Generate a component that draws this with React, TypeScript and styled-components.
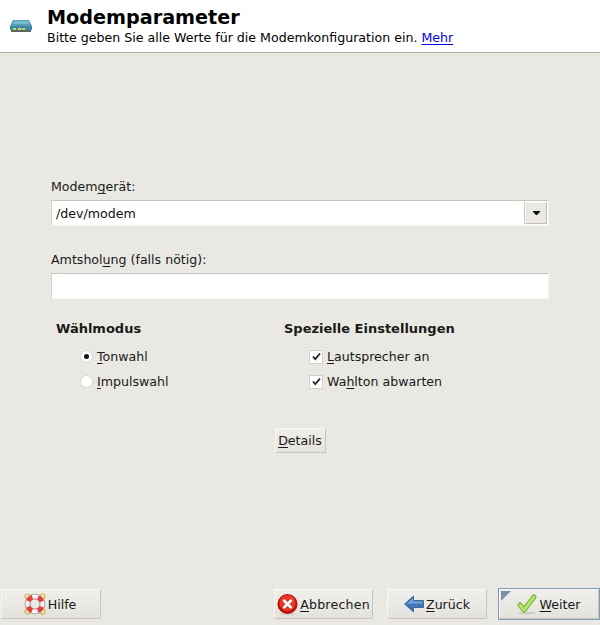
import React from 'react'
import styled, { createGlobalStyle } from 'styled-components'

const GlobalStyle = createGlobalStyle`
  html, body {
    margin: 0;
    padding: 0;
    background: #e9e8e3;
  }
  body {
    font-family: "DejaVu Sans", sans-serif;
    font-size: 12.6px;
    color: #111;
  }
  u {
    text-underline-offset: 2px;
    text-decoration-thickness: 1px;
  }
`

const Window = styled.div`
  width: 600px;
  height: 625px;
  display: flex;
  flex-direction: column;
  overflow: hidden;
  background: #e9e8e3;
`

const Header = styled.header`
  height: 52px;
  flex: none;
  background: #fff;
  display: flex;
  align-items: flex-start;
  padding-left: 10px;
  border-bottom: 1px solid #b3ab9c;
`

const HeaderIcon = styled.div`
  width: 22px;
  margin-top: 20px;
  margin-right: 15px;
  display: flex;
`

const HeaderText = styled.div`
  display: flex;
  flex-direction: column;
  padding-top: 6px;
`

const Title = styled.h1`
  margin: 0;
  font-size: 19.2px;
  line-height: 24px;
  font-weight: bold;
  color: #000;
`

const Subtitle = styled.p`
  margin: 0;
  font-size: 12.6px;
  line-height: 16px;
  color: #000;

  a {
    color: #0000ee;
    text-decoration: underline;
    text-underline-offset: 2px;
    text-decoration-thickness: 1px;
  }
`

const Body = styled.main`
  flex: 1;
  display: flex;
  flex-direction: column;
  padding: 126px 51px 0;
`

const Fields = styled.div`
  display: flex;
  flex-direction: column;
  gap: 26px;
  margin-bottom: 22px;
`

const FieldLabel = styled.label`
  display: block;
  line-height: 16px;
  margin-bottom: 5px;
  color: #1a1a1a;
`

const Entry = styled.div`
  height: 26px;
  box-sizing: border-box;
  background: #fff;
  border: 1px solid #f6f5f3;
  border-top-color: #c9c5bc;
  border-left-color: #d6d3cb;
  display: flex;
  align-items: center;
  padding-left: 4px;
  color: #111;
`

const ComboBox = styled(Entry)`
  padding-right: 1px;
  justify-content: space-between;
`

const ComboArrow = styled.div`
  width: 22px;
  height: 22px;
  box-sizing: border-box;
  background: #e9e8e3;
  border: 1px solid #f7f6f4;
  border-right-color: #c4c0b7;
  border-bottom-color: #c4c0b7;
  box-shadow: -1px 0 0 #cfcbc2;
  display: flex;
  align-items: center;
  justify-content: center;
`

const Options = styled.div`
  display: flex;
  padding-left: 5px;
`

const OptionGroup = styled.section<{ $width: number }>`
  width: ${p => p.$width}px;
  flex: none;
`

const GroupTitle = styled.h2`
  margin: 0 0 7px;
  font-size: 13px;
  line-height: 16px;
  font-weight: bold;
  color: #1a1a1a;
`

const OptionRow = styled.div<{ $indent: number }>`
  display: flex;
  align-items: center;
  height: 25px;
  padding-left: ${p => p.$indent}px;
  color: #1a1a1a;
`

const Radio = styled.span<{ $checked?: boolean }>`
  width: 13px;
  height: 13px;
  margin-right: 4px;
  box-sizing: border-box;
  border-radius: 50%;
  background: #fff;
  border: 1px solid #d8d5ce;
  display: flex;
  align-items: center;
  justify-content: center;

  &::after {
    content: '';
    width: 5px;
    height: 5px;
    border-radius: 50%;
    background: ${p => (p.$checked ? '#111' : 'transparent')};
  }
`

const CheckBox = styled.span`
  width: 14px;
  height: 14px;
  margin-right: 4px;
  box-sizing: border-box;
  background: #fff;
  border: 1px solid #d2cfc7;
  display: flex;
  align-items: center;
  justify-content: center;
`

const Center = styled.div`
  display: flex;
  justify-content: center;
  margin-top: 34px;
`

const Button = styled.button<{ $width?: number; $height?: number; $focus?: boolean; $nudge?: number }>`
  position: relative;
  width: ${p => (p.$width ? `${p.$width}px` : 'auto')};
  height: ${p => p.$height || 30}px;
  box-sizing: border-box;
  padding: 0 ${p => p.$nudge || 0}px 0 0;
  display: flex;
  align-items: center;
  justify-content: center;
  gap: 2px;
  font: inherit;
  color: #1a1a1a;
  background: linear-gradient(#f0efec, #e4e2dc);
  border: 1px solid #f8f7f5;
  border-right-color: #c9c5bb;
  border-bottom-color: #c9c5bb;
  outline: ${p => (p.$focus ? '1px solid #7f9ab8' : 'none')};
  outline-offset: 0;
`

const FocusCorner = styled.span`
  position: absolute;
  left: 1px;
  top: 1px;
  width: 0;
  height: 0;
  border-top: 10px solid #7d8fa8;
  border-right: 10px solid transparent;
`

const WideLabel = styled.span`
  letter-spacing: 0.2px;
`

const Footer = styled.footer`
  display: flex;
  align-items: center;
  padding: 0 1px 6px 1px;
`

const RightButtons = styled.div`
  margin-left: auto;
  display: flex;
  gap: 12px;

  > :first-child {
    margin-right: 2px;
  }
`

const ModemIcon = () => (
  <svg width="22" height="13" viewBox="0 0 22 13">
    <path d="M3 0h16l3 6H0z" fill="#5a9db8" />
    <path d="M4 1h14l1 3H3z" fill="#78bcd2" />
    <rect x="0" y="6" width="22" height="4" fill="#3e88a8" />
    <rect x="1" y="10" width="20" height="2" fill="#5c6468" />
    <rect x="3" y="8" width="3" height="2" fill="#b8e05a" />
    <rect x="8" y="8" width="3" height="2" fill="#e8d95a" />
    <rect x="12" y="8" width="3" height="2" fill="#b8e05a" />
  </svg>
)

const LifebuoyIcon = () => (
  <svg width="22" height="22" viewBox="0 0 22 22">
    <circle cx="3.5" cy="3.5" r="2.5" fill="none" stroke="#d8b52a" strokeWidth="1.2" />
    <circle cx="18.5" cy="3.5" r="2.5" fill="none" stroke="#d8b52a" strokeWidth="1.2" />
    <circle cx="3.5" cy="18.5" r="2.5" fill="none" stroke="#d8b52a" strokeWidth="1.2" />
    <circle cx="18.5" cy="18.5" r="2.5" fill="none" stroke="#d8b52a" strokeWidth="1.2" />
    <circle cx="11" cy="11" r="7.5" fill="none" stroke="#f3f2f2" strokeWidth="5" />
    <circle cx="11" cy="11" r="7.5" fill="none" stroke="#ee3b3b" strokeWidth="5" strokeDasharray="5.89 5.89" strokeDashoffset="-2.95" />
    <circle cx="11" cy="11" r="10" fill="none" stroke="#9a9a9a" strokeWidth="0.8" />
    <circle cx="11" cy="11" r="5" fill="none" stroke="#9a7070" strokeWidth="0.8" />
  </svg>
)

const CancelIcon = () => (
  <svg width="21" height="21" viewBox="0 0 22 22">
    <ellipse cx="11" cy="21" rx="8" ry="1" fill="#cfcdc7" />
    <circle cx="11" cy="10.5" r="10.5" fill="#b80f0a" />
    <circle cx="11" cy="9.5" r="8.5" fill="#e8382a" />
    <path d="M7.5 7l7 7M14.5 7l-7 7" stroke="#fff" strokeWidth="2.8" strokeLinecap="round" />
  </svg>
)

const BackIcon = () => (
  <svg width="20" height="18" viewBox="0 0 20 18">
    <path d="M0.5 9L9.5 1v4.5H19.5v7H9.5V17z" fill="#3d76b8" stroke="#2a5a94" strokeWidth="0.8" />
    <path d="M2.5 9L9 3.5v3h9.5v2H8z" fill="#77a5d6" />
  </svg>
)

const ForwardIcon = () => (
  <svg width="22" height="22" viewBox="0 0 22 22">
    <ellipse cx="11" cy="20" rx="9" ry="1.5" fill="#cfcdc7" />
    <path d="M4 12l4 5L18 4" fill="none" stroke="#72ad33" strokeWidth="5" strokeLinejoin="round" strokeLinecap="round" />
    <path d="M4 12l4 5L18 4" fill="none" stroke="#b4e46f" strokeWidth="3" strokeLinejoin="round" strokeLinecap="round" />
  </svg>
)

const ArrowDown = () => (
  <svg width="7" height="4" viewBox="0 0 7 4">
    <path d="M0 0h7v1L4 4H3L0 1z" fill="#111" />
  </svg>
)

const CheckMark = () => (
  <svg width="9" height="9" viewBox="0 0 9 9">
    <path d="M1 4.5l2.3 2.6L8 1.5" fill="none" stroke="#222" strokeWidth="1.8" />
  </svg>
)

const App = () => (
  <Window>
    <GlobalStyle />
    <Header>
      <HeaderIcon>
        <ModemIcon />
      </HeaderIcon>
      <HeaderText>
        <Title>Modemparameter</Title>
        <Subtitle>
          Bitte geben Sie alle Werte für die Modemkonfiguration ein. <a href="#mehr">Mehr</a>
        </Subtitle>
      </HeaderText>
    </Header>

    <Body>
      <Fields>
        <div>
          <FieldLabel>
            Modem<u>g</u>erät:
          </FieldLabel>
          <ComboBox>
            /dev/modem
            <ComboArrow>
              <ArrowDown />
            </ComboArrow>
          </ComboBox>
        </div>
        <div>
          <FieldLabel>
            Amtshol<u>u</u>ng (falls nötig):
          </FieldLabel>
          <Entry />
        </div>
      </Fields>

      <Options>
        <OptionGroup $width={228}>
          <GroupTitle>Wählmodus</GroupTitle>
          <OptionRow $indent={24}>
            <Radio $checked />
            <span>
              <u>T</u>onwahl
            </span>
          </OptionRow>
          <OptionRow $indent={24}>
            <Radio />
            <span>
              <u>I</u>mpulswahl
            </span>
          </OptionRow>
        </OptionGroup>
        <OptionGroup $width={260}>
          <GroupTitle>Spezielle Einstellungen</GroupTitle>
          <OptionRow $indent={25}>
            <CheckBox>
              <CheckMark />
            </CheckBox>
            <span>
              <u>L</u>autsprecher an
            </span>
          </OptionRow>
          <OptionRow $indent={25}>
            <CheckBox>
              <CheckMark />
            </CheckBox>
            <span>
              Wa<u>h</u>lton abwarten
            </span>
          </OptionRow>
        </OptionGroup>
      </Options>

      <Center>
        <Button $width={51} $height={25}>
          <span>
            <u>D</u>etails
          </span>
        </Button>
      </Center>
    </Body>

    <Footer>
      <Button $width={100} $nudge={2}>
        <LifebuoyIcon />
        <span>Hilfe</span>
      </Button>
      <RightButtons>
        <Button $width={99}>
          <CancelIcon />
          <WideLabel>
            <u>A</u>bbrechen
          </WideLabel>
        </Button>
        <Button $width={100}>
          <BackIcon />
          <span>
            <u>Z</u>urück
          </span>
        </Button>
        <Button $width={100} $focus $nudge={2}>
          <FocusCorner />
          <ForwardIcon />
          <span>
            <u>W</u>eiter
          </span>
        </Button>
      </RightButtons>
    </Footer>
  </Window>
)

export default App
